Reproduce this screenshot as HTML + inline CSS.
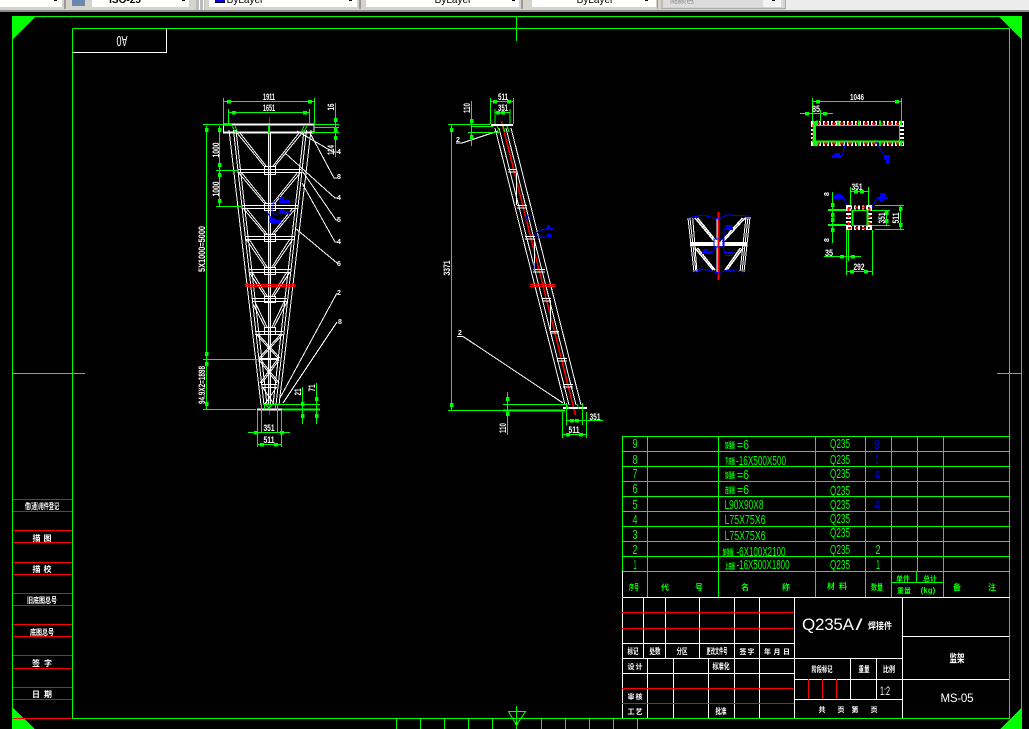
<!DOCTYPE html>
<html lang="zh"><head><meta charset="utf-8"><title>CAD</title>
<style>
html,body{margin:0;padding:0;background:#000;width:1029px;height:729px;overflow:hidden}
svg{display:block}
.g{stroke:#0f0;fill:none;stroke-width:1}
.g2{stroke:#0f0;fill:none;stroke-width:2}
.w{stroke:#fff;fill:none;stroke-width:1}
.w2{stroke:#fff;fill:none;stroke-width:2}
.r{stroke:#f00;fill:none;stroke-width:1}
.b{stroke:#00f;fill:none;stroke-width:1}
.a{stroke:#0f0;fill:none;stroke-width:3.5}
text{font-family:"Liberation Sans","Noto Sans CJK SC",sans-serif;font-size:9px;text-anchor:middle}
.tw{fill:#fff}.tg{fill:#0f0}.tb{fill:#00f}
.d{font-size:9px;font-weight:bold;fill:#fff}
.c{font-family:"Noto Sans CJK SC","WenQuanYi Zen Hei",sans-serif;font-size:8px;font-weight:bold}
.s{font-family:"Noto Sans CJK SC","WenQuanYi Zen Hei",sans-serif;font-size:7px;font-weight:bold}
.n{font-size:12.500px}
</style></head><body>
<svg xmlns="http://www.w3.org/2000/svg" width="1029" height="729" viewBox="0 0 1029 729" shape-rendering="crispEdges">
<rect width="1029" height="729" fill="#000"/>
<!-- toolbar -->
<rect width="1029" height="11" fill="#d6d3cc"/>
<rect x="785" width="244" height="10" fill="#ececec"/>
<rect y="10" width="1029" height="2" fill="#8c8c8c"/>
<rect x="0" width="62" height="7" fill="#fff"/>
<rect x="64" width="2" height="9" fill="#999"/>
<rect x="72" width="13" height="6" fill="#6c87ad"/>
<rect x="92" width="97" height="7" fill="#fff"/>
<text x="125" y="3" style="font-size:10px;font-weight:bold" fill="#000">ISO-25</text>
<rect x="196" width="9" height="10" fill="#bbb"/><rect x="199" width="1" height="10" fill="#fff"/><rect x="203" width="1" height="10" fill="#fff"/>
<rect x="209" width="148" height="7" fill="#fff"/>
<rect x="215" width="10" height="2" fill="#00f"/><rect x="215" y="2" width="10" height="1" fill="#000"/>
<text x="245" y="3" style="font-size:10px" fill="#000">ByLayer</text>
<rect x="359" width="2" height="9" fill="#999"/>
<rect x="366" width="153" height="7" fill="#fff"/>
<text x="453" y="3" style="font-size:10px" fill="#000">ByLayer</text>
<rect x="521" width="2" height="9" fill="#999"/>
<rect x="532" width="124" height="7" fill="#fff"/>
<text x="595" y="3" style="font-size:10px" fill="#000">ByLayer</text>
<rect x="657" width="1" height="9" fill="#999"/>
<rect x="663" width="120" height="7" fill="#dcdcdc"/>
<rect x="763" width="18" height="7" fill="#f4f4f4"/>
<path d="M662 0v8.500h123.500v-8.500" fill="none" stroke="#aaa"/>
<text x="682" y="3" class="c" style="font-weight:normal" fill="#888">随颜色</text>
<g fill="#000"><rect x="54" y="0" width="3" height="1"/><rect x="182" y="0" width="3" height="1"/><rect x="349" y="0" width="3" height="1"/><rect x="512" y="0" width="3" height="1"/><rect x="645" y="0" width="3" height="1"/><rect x="772" y="0" width="3" height="1"/></g>

<!-- frame -->
<path class="g" d="M12.500 16.500H1021.500V729M12.500 16.500V729M72.500 28.500H1009.500V718.500H72.500V28.500M516.500 16.500V41M12.500 373.500H85M997 373.500H1021.500"/>
<path class="g" d="M396.500 718V729M420.500 718V729M444.500 718V729M468.500 718V729M492.500 718V729M516.500 706V729M541.500 718V729M565.500 718V729M589.500 718V729M613.500 718V729M637.500 718V729"/>
<path class="g" d="M508.500 711.500H525.500L516.500 725Z"/><rect x="515" y="722" width="3" height="3" fill="#0f0"/>
<g fill="#0f0"><path d="M12 16H36L12 40Z"/><path d="M998 16H1022V40Z"/><path d="M12 707L35 729H12Z"/><path d="M1022 707V729H1000Z"/></g>
<!-- A0 -->
<path class="w" d="M72.500 52.500H166.500V28.500"/>
<text transform="rotate(180 122 41.500)" x="122" y="47" class="tw" style="font-size:15px" textLength="11" lengthAdjust="spacingAndGlyphs">A0</text>

<!-- FRONT TRUSS -->
<path class="w" d="M268.500 133V405M270.500 133V405"/>
<path class="r" d="M269.500 117V415"/>
<path class="w2" d="M223 124.500H314M223 132.500H314"/><path class="w" d="M223.500 124V133M314 124V133"/>
<path class="w" d="M229 130L261 405M233.500 130L264 405M311 130L279 405M306.500 130L276 405M236 130L267 405M304 130L273 405"/>
<!-- horizontals -->
<path class="w" d="M238 169.500H301M238 172.500H301M242 205.500H298M242 208.500H298M246 236.500H294M246 239.500H294M249 269.500H291M249 272.500H291M252 298.500H287M252 301.500H287M255 331.500H283M255 334.500H283M262 384.500H277M262 387.500H277"/>
<path class="w2" d="M259 359H279"/>
<!-- boxes -->
<path class="w" d="M264.500 166.500H275.500V174.500H264.500ZM264.500 203.500H275.500V210.500H264.500ZM264.500 234.500H275.500V241.500H264.500ZM264.500 267.500H275.500V274.500H264.500ZM264.500 296.500H275.500V302.500H264.500ZM264.500 327.500H275.500V334.500H264.500Z"/>
<!-- diagonals -->
<path class="w" d="M237 133L264 166M240 133L266 166M302 133L275 166M299 133L273 166M238 172L264 203M241 172L266 203M301 172L275 203M298 172L273 203M243 208L265 234M246 208L267 234M296 208L274 234M293 208L272 234M246 239L265 267M249 239L267 267M293 239L274 267M290 239L272 267M249 272L265 296M252 272L267 296M290 272L274 296M287 272L272 296M252 302L265 327M255 302L267 327M287 302L274 327M284 302L272 327M256 334L278 358M258 334L280 358M283 334L261 358M281 334L259 358M259 360L277 383M261 360L279 383M279 360L262 383M277 360L260 383M263 388L274 404M276 388L265 404"/>
<path class="r" d="M245 284.500H295M245 286.500H295"/>
<path class="w2" d="M257 409.500H282"/>
<path class="g" d="M232 126L236 133M235 126L238 133M307 126L303 133M304 126L301 133M269.500 126V133M268.500 126V133M264.500 404V409M275.500 404V409M265 404.500H275M266 405L270 409M272 405L268 409"/>
<!-- leaders -->
<path class="w" d="M297 131L333 152H337M310 133L334 178H337M285 153L335 198H338M303 172L336 220H338M302 183L335 242H338M295 228L337 263H338M280 398L337 293M283 403L337 322"/>
<text x="339" y="154" class="d" style="font-size:7px">4</text><text x="339" y="179" class="d" style="font-size:7px">8</text><text x="339" y="200" class="d" style="font-size:7px">4</text><text x="339" y="222" class="d" style="font-size:7px">5</text><text x="339" y="244" class="d" style="font-size:7px">4</text><text x="339" y="266" class="d" style="font-size:7px">6</text><text x="339" y="295" class="d" style="font-size:7px">2</text><text x="340" y="324" class="d" style="font-size:7px">8</text>
<!-- blue -->
<path class="b" d="M274 206C270 209 272 213 277 215M272 205L276 200M266 211L272 219"/>
<g fill="#00f"><rect x="279" y="200" width="11" height="3"/><rect x="279" y="197" width="5" height="3"/><rect x="279" y="211" width="11" height="3"/><rect x="279" y="209" width="5" height="2"/><rect x="270" y="220" width="11" height="3"/><rect x="270" y="218" width="5" height="2"/></g>
<!-- green dims -->
<path class="g" d="M223.500 98V124M314.500 98V124M228.500 109V124M309.500 109V124M223 101.500H314M228 112.500H310"/>
<path class="a" d="M227 101.500h4M308 101.500h4M232 112.500h4M303 112.500h4"/>
<text x="269" y="100" class="d" textLength="12" lengthAdjust="spacingAndGlyphs">1911</text>
<text x="269" y="111" class="d" textLength="12" lengthAdjust="spacingAndGlyphs">1651</text>
<path class="g" d="M335.500 103V157M314 124.500H339M314 127.500H339M312 132.500H339"/>
<path class="a" d="M335.500 118v4M335.500 128v4M335.500 136v4"/>
<text transform="rotate(-90 331 107)" x="331" y="110" class="d" textLength="7" lengthAdjust="spacingAndGlyphs">16</text>
<text transform="rotate(-90 331 150)" x="331" y="153" class="d" textLength="10" lengthAdjust="spacingAndGlyphs">114</text>
<path class="g" d="M206.500 126V409M203 124.500H232M219.500 126V206M216 170.500H238M216 206.500H242M203 359.500H258M203 409.500H256"/>
<path class="a" d="M206.500 128v4M206.500 352v4M206.500 362v4M206.500 402v4M219.500 128v4M219.500 163v4M219.500 173v4M219.500 199v4"/>
<text transform="rotate(-90 216 150)" x="216" y="153" class="d" textLength="15" lengthAdjust="spacingAndGlyphs">1000</text>
<text transform="rotate(-90 216 189)" x="216" y="192" class="d" textLength="15" lengthAdjust="spacingAndGlyphs">1000</text>
<text transform="rotate(-90 202 249)" x="202" y="252" class="d" textLength="46" lengthAdjust="spacingAndGlyphs">5X1000=5000</text>
<text transform="rotate(-90 202 385)" x="202" y="388" class="d" textLength="38" lengthAdjust="spacingAndGlyphs">94.9X2=1898</text>
<path class="g" d="M261.500 405V433M277.500 405V433M248 432.500H290M257.500 411V447M281.500 411V447M258 444.500H282M268 404.500H320M316.500 383V424M302.500 387V424"/>
<path class="g2" d="M282 409.500H320"/>
<path class="a" d="M254 432.500h4M280 432.500h4M260 444.500h4M274 444.500h4M302.500 402v4M302.500 414v4M316.500 397v4M316.500 414v4"/>
<text x="269" y="431" class="d" textLength="11" lengthAdjust="spacingAndGlyphs">351</text>
<text x="269" y="443" class="d" textLength="11" lengthAdjust="spacingAndGlyphs">511</text>
<text transform="rotate(-90 298 392)" x="298" y="395" class="d" textLength="7" lengthAdjust="spacingAndGlyphs">21</text>
<text transform="rotate(-90 312 388)" x="312" y="391" class="d" textLength="7" lengthAdjust="spacingAndGlyphs">71</text>

<!-- SIDE VIEW -->
<path class="w" d="M495 128L565 405M499 128L569 405M506 128L576 405M511 128L581 405"/>
<path d="M501.500 121L575.500 415" stroke="#f00" stroke-width="1.500" fill="none"/>
<path class="w2" d="M491 125H513"/><path class="w2" d="M563 408H587"/>
<path class="w" d="M508 169.500H517M508 172H517M517 205.500H527M517 208H527M525 236.500H535M525 239H535M533 269.500H545M533 272H545M542 298.500H551M542 301H551M550 331.500H559M550 333H559M557 358.500H567M557 361H567M563 384.500H573M563 387H573"/>
<path class="w" d="M516.500 173V205M534.500 239V270M550.500 300V330"/>
<path class="r" d="M530 284.500H555M530 286.500H555"/>
<path class="w" d="M456 143H462L498 131M457 336.500H463L563 403"/>
<path class="g" d="M497 126L500 132M503 126L505 132M507 126L509 132M566 404L569 409M577 404L579 409"/>
<text x="458" y="142" class="d" style="font-size:7px">2</text>
<text x="460" y="335" class="d" style="font-size:7px">2</text>
<path class="b" d="M526 216V222M526 216H531M534 236C538 231 543 229 546 229M535 237H552M534 263V270"/>
<g fill="#00f"><rect x="546" y="228" width="7" height="2"/><rect x="547" y="225" width="3" height="3"/><rect x="547" y="234" width="4" height="3"/></g>
<path class="g" d="M451.500 124V410M448 124.500H490M471.500 101V146M471 126.500H493M468 132.500H500M507.500 392V435M503 404.500H565M490.500 98V124M513.500 98V124M495 109V124M510 109V124M491 101.500H513M495 112.500H510M566.500 403V425M582.500 403V425M566 420.500H603M562.500 412V438M586.500 412V438M562 434.500H586"/>
<path class="g2" d="M503 410.500H565"/><path class="g" d="M448 410.500H503"/>
<path class="a" d="M451.500 128v4M451.500 403v4M471.500 119v4M471.500 135v4M507.500 397v4M507.500 412v4M493 101.500h4M507 101.500h4M496 112.500h4M501 112.500h4M570 420.500h4M575 420.500h4M566 434.500h4M579 434.500h4"/>
<text x="503" y="100" class="d" textLength="10" lengthAdjust="spacingAndGlyphs">511</text>
<text x="503" y="111" class="d" textLength="10" lengthAdjust="spacingAndGlyphs">351</text>
<text x="595" y="420" class="d" textLength="11" lengthAdjust="spacingAndGlyphs">351</text>
<text x="574" y="433" class="d" textLength="11" lengthAdjust="spacingAndGlyphs">511</text>
<text transform="rotate(-90 467 108)" x="467" y="111" class="d" textLength="10" lengthAdjust="spacingAndGlyphs">110</text>
<text transform="rotate(-90 503 428)" x="503" y="431" class="d" textLength="10" lengthAdjust="spacingAndGlyphs">110</text>
<text transform="rotate(-90 447 268)" x="447" y="271" class="d" textLength="15" lengthAdjust="spacingAndGlyphs">3371</text>

<!-- PLAN -->
<g>
<path d="M811 123.500H904M811 143.500H904" stroke="#fff" stroke-width="5" stroke-dasharray="2 2" fill="none"/>
<path d="M816 123.500H899M816 143.500H899" stroke="#f00" stroke-width="2" stroke-dasharray="4 4" fill="none"/>
<path d="M813.500 121V146M901.500 121V146" stroke="#fff" stroke-width="5" stroke-dasharray="2 2" fill="none"/>
<path d="M813.500 124V144" stroke="#f00" stroke-width="2" stroke-dasharray="3 4" fill="none"/>
<path class="g" d="M812 125.500H899M899.500 125V142"/>
<path class="g2" d="M812 141.500H904"/>
<path d="M814.500 121V146" stroke="#0f0" stroke-width="3" fill="none"/>
<path d="M816 123H904" stroke="#0f0" stroke-width="5" stroke-dasharray="2 19" fill="none"/>
<path d="M816 143.500H904" stroke="#0f0" stroke-width="5" stroke-dasharray="2 19" fill="none"/>
</g>
<path class="g" d="M812.500 98V121M901.500 98V121M812 101.500H902M800 113.500H833M820.500 110V122"/>
<path class="a" d="M816 101.500h4M895 101.500h4M805 113.500h4M823 113.500h4"/>
<text x="857" y="100" class="d" style="font-size:8px" textLength="14" lengthAdjust="spacingAndGlyphs">1046</text>
<text x="816" y="112" class="d" textLength="8" lengthAdjust="spacingAndGlyphs">85</text>
<path class="b" d="M842 156L846 142M887 160L876 142M872 126V128"/>
<g fill="#00f"><rect x="832" y="155" width="10" height="3"/><rect x="834" y="153" width="6" height="2"/><rect x="884" y="155" width="6" height="5"/><rect x="886" y="160" width="3" height="3"/></g>

<!-- SECTION -->
<g>
<path d="M846 207.500H872M846 228H872" stroke="#fff" stroke-width="4" stroke-dasharray="2 2" fill="none"/>
<path d="M848 207.500H870M848 228H870" stroke="#f00" stroke-width="2" stroke-dasharray="3 4" fill="none"/>
<path d="M848.500 205V230M869.500 205V230" stroke="#fff" stroke-width="5" stroke-dasharray="2 2" fill="none"/>
<path d="M848.500 208V228M869.500 208V228" stroke="#f00" stroke-width="2" stroke-dasharray="3 4" fill="none"/>
<path class="g2" d="M852.500 210V225M867.500 210V225"/>
<path class="g" d="M852 210.500H868M852 225.500H868"/>
</g>
<path class="g" d="M850.500 187V205M868.500 187V205M850 191.500H868M832.500 192V243M872 210.500H890M872 225.500H890M886.500 210V226M875 205.500H904M875 229.500H904M900.500 205V230M824 256.500H861M846.500 230V275M848.500 230V261M872.500 230V275M846 271.500H872"/>
<path class="g2" d="M828 210H846M828 225H846"/>
<path class="a" d="M854 191.500h4M860 191.500h4M832.500 203v4M832.500 213v4M832.500 218v4M832.500 228v4M886.500 211v4M886.500 219v4M900.500 207v4M900.500 223v4M840 256.500h4M851 256.500h4M850 271.500h4M864 271.500h4"/>
<text x="857" y="190" class="d" textLength="11" lengthAdjust="spacingAndGlyphs">351</text>
<text transform="rotate(-90 826 194)" x="826" y="197" class="d" style="font-size:7px">8</text>
<text transform="rotate(-90 826 240)" x="826" y="243" class="d" style="font-size:7px">8</text>
<text transform="rotate(-90 882 218)" x="882" y="221" class="d" textLength="11" lengthAdjust="spacingAndGlyphs">351</text>
<text transform="rotate(-90 896 218)" x="896" y="221" class="d" textLength="11" lengthAdjust="spacingAndGlyphs">511</text>
<text x="829" y="256" class="d" textLength="8" lengthAdjust="spacingAndGlyphs">35</text>
<text x="859" y="270" class="d" textLength="11" lengthAdjust="spacingAndGlyphs">292</text>
<path class="b" d="M844 198L847 205M877 198L872 207"/>
<g fill="#00f"><rect x="834" y="196" width="10" height="3"/><rect x="835" y="194" width="6" height="2"/><rect x="877" y="197" width="11" height="2"/><rect x="880" y="193" width="6" height="4"/><rect x="880" y="199" width="3" height="3"/></g>

<!-- DETAIL -->
<path class="w" d="M688 218L694 272M690 218L696 272M692.700 218L697 272M750 217L744 272M748 217L742 272M746 217L740 272"/>
<path d="M695 218L715 242M697.500 218L717 242M745 218L723 242M742.500 218L721 242M695 248L713 270M697.500 248L715 270M743 248L727 270M740.500 248L725 270" stroke="#fff" stroke-width="1.500" fill="none"/>
<path d="M690 244H747" stroke="#fff" stroke-width="4" fill="none"/>
<path class="w" d="M717 218V272"/>
<path d="M718.500 212V280" stroke="#f00" stroke-width="2" fill="none"/>
<path class="b" d="M688 218L703 215L718 219L727 215L750 216M694 272L703 269L718 273L728 270L744 272M714 239H723V247H714ZM724 228V246M712 252L716 247M725 254L723 247"/>
<g fill="#00f"><rect x="725" y="225" width="7" height="2"/><rect x="725" y="228" width="8" height="2"/><rect x="702" y="251" width="11" height="3"/><rect x="703" y="249" width="5" height="2"/><rect x="725" y="252" width="8" height="2"/><rect x="725" y="255" width="8" height="1"/></g>

<!-- PARTS TABLE -->
<path class="g" d="M622.500 436.500H1009.500M622.500 451.500H1009.500M622.500 466.500H1009.500M622.500 481.500H1009.500M622.500 496.500H1009.500M622.500 511.500H1009.500M622.500 526.500H1009.500M622.500 541.500H1009.500M622.500 556.500H1009.500M622.500 571.500H1009.500M622.500 436V571M647.500 436V597M718.500 436V597M815.500 436V597M865.500 436V597M891.500 436V597M917.500 436V571M943.500 436V597M1009.500 436V718M891.500 582.500H943.500M916.500 571V582"/>
<path class="w" d="M622.500 571V597"/>
<text x="635" y="448" class="tg n" textLength="5" lengthAdjust="spacingAndGlyphs">9</text>
<text x="635" y="464" class="tg n" textLength="5" lengthAdjust="spacingAndGlyphs">8</text>
<text x="635" y="478" class="tg n" textLength="5" lengthAdjust="spacingAndGlyphs">7</text>
<text x="635" y="493" class="tg n" textLength="5" lengthAdjust="spacingAndGlyphs">6</text>
<text x="635" y="509" class="tg n" textLength="5" lengthAdjust="spacingAndGlyphs">5</text>
<text x="635" y="524" class="tg n" textLength="5" lengthAdjust="spacingAndGlyphs">4</text>
<text x="635" y="539" class="tg n" textLength="5" lengthAdjust="spacingAndGlyphs">3</text>
<text x="635" y="554" class="tg n" textLength="5" lengthAdjust="spacingAndGlyphs">2</text>
<text x="635" y="569" class="tg n" textLength="3" lengthAdjust="spacingAndGlyphs">1</text>

<text x="730" y="448" class="tg c" textLength="10" lengthAdjust="spacingAndGlyphs">加强板</text><text x="743" y="449" class="tg n" textLength="12" lengthAdjust="spacingAndGlyphs">=6</text>
<text x="730" y="464" class="tg c" textLength="10" lengthAdjust="spacingAndGlyphs">下底板</text><text x="761" y="465" class="tg n" textLength="50" lengthAdjust="spacingAndGlyphs">-16X500X500</text>
<text x="730" y="478" class="tg c" textLength="10" lengthAdjust="spacingAndGlyphs">加强板</text><text x="743" y="479" class="tg n" textLength="12" lengthAdjust="spacingAndGlyphs">=6</text>
<text x="730" y="493" class="tg c" textLength="10" lengthAdjust="spacingAndGlyphs">连接板</text><text x="743" y="494" class="tg n" textLength="12" lengthAdjust="spacingAndGlyphs">=6</text>
<text x="744" y="509" class="tg n" textLength="39" lengthAdjust="spacingAndGlyphs">L90X90X8</text>
<text x="745" y="524" class="tg n" textLength="41" lengthAdjust="spacingAndGlyphs">L75X75X6</text>
<text x="745" y="540" class="tg n" textLength="41" lengthAdjust="spacingAndGlyphs">L75X75X6</text>
<text x="728" y="555" class="tg c" textLength="11" lengthAdjust="spacingAndGlyphs">加强板</text><text x="761" y="556" class="tg n" textLength="49" lengthAdjust="spacingAndGlyphs">-6X100X2100</text>
<text x="730" y="569" class="tg c" textLength="10" lengthAdjust="spacingAndGlyphs">上底板</text><text x="763" y="569" class="tg n" textLength="53" lengthAdjust="spacingAndGlyphs">-16X500X1800</text>

<text x="840" y="448" class="tg n" textLength="20" lengthAdjust="spacingAndGlyphs">Q235</text>
<text x="840" y="464" class="tg n" textLength="20" lengthAdjust="spacingAndGlyphs">Q235</text>
<text x="840" y="478" class="tg n" textLength="20" lengthAdjust="spacingAndGlyphs">Q235</text>
<text x="840" y="495" class="tg n" textLength="20" lengthAdjust="spacingAndGlyphs">Q235</text>
<text x="840" y="509" class="tg n" textLength="20" lengthAdjust="spacingAndGlyphs">Q235</text>
<text x="840" y="523" class="tg n" textLength="20" lengthAdjust="spacingAndGlyphs">Q235</text>
<text x="840" y="537" class="tg n" textLength="20" lengthAdjust="spacingAndGlyphs">Q235</text>
<text x="840" y="554" class="tg n" textLength="20" lengthAdjust="spacingAndGlyphs">Q235</text>
<text x="840" y="569" class="tg n" textLength="20" lengthAdjust="spacingAndGlyphs">Q235</text>
<text x="877" y="449" class="tb n" textLength="5" lengthAdjust="spacingAndGlyphs">8</text>
<text x="877" y="464" class="tb n" textLength="4" lengthAdjust="spacingAndGlyphs">1</text>
<text x="877" y="479" class="tb n" textLength="5" lengthAdjust="spacingAndGlyphs">4</text>
<text x="877" y="509" class="tb n" textLength="5" lengthAdjust="spacingAndGlyphs">4</text>
<text x="878" y="554" class="tg n" textLength="5" lengthAdjust="spacingAndGlyphs">2</text>
<text x="878" y="569" class="tg n" textLength="4" lengthAdjust="spacingAndGlyphs">1</text>

<text x="634" y="590" class="tg c" textLength="10" lengthAdjust="spacingAndGlyphs">序号</text>
<text x="665" y="590" class="tg c">代</text><text x="699" y="590" class="tg c">号</text>
<text x="745" y="590" class="tg c">名</text><text x="786" y="590" class="tg c">称</text>
<text x="831" y="589" class="tg c">材</text><text x="843" y="589" class="tg c">料</text>
<text x="877" y="590" class="tg c" textLength="12" lengthAdjust="spacingAndGlyphs">数量</text>
<text x="903" y="581" class="tg s" textLength="14" lengthAdjust="spacing">单件</text>
<text x="930" y="581" class="tg s" textLength="14" lengthAdjust="spacing">总计</text>
<text x="904" y="593" class="tg s" textLength="14" lengthAdjust="spacing">重量</text>
<text x="928" y="593" class="tg" style="font-size:8px;font-weight:bold">(kg)</text>
<text x="957" y="590" class="tg c">备</text><text x="992" y="590" class="tg c">注</text>

<!-- TITLE BLOCK -->
<path class="w" d="M622.500 597.500H1009.500M622.500 597.500V718M643.500 597V658M665.500 597V658M699.500 597V658M734.500 597V658M759.500 597V658M794.500 597V718M902.500 597V718M622 643.500H794M622 658.500H902M622 673.500H794M647.500 658V718M673.500 658V718M708.500 658V718M734.500 658V718M759.500 658V718M794 679.500H1009M794 699.500H902M850.500 658V699M876.500 658V699M902 636.500H1009"/>
<path class="r" d="M622 612.500H794M622 628.500H794M622 688.500H794M622 703.500H794M808.500 679V699M822.500 679V699M836.500 679V699"/>
<path class="g" d="M72 718.500H1009"/>
<text x="828" y="630" class="tw" style="font-size:17px" textLength="52" lengthAdjust="spacing">Q235A</text>
<text x="859" y="630" class="tw" style="font-size:16px" textLength="7" lengthAdjust="spacingAndGlyphs">/</text>
<text x="880" y="629" class="tw c" style="font-size:9px" textLength="24" lengthAdjust="spacingAndGlyphs">焊接件</text>
<text x="957" y="662" class="tw c" style="font-size:11px" textLength="15" lengthAdjust="spacingAndGlyphs">监架</text>
<text x="957" y="702" class="tw" style="font-size:11.500px" textLength="33" lengthAdjust="spacing">MS-05</text>
<text x="885" y="695" class="tw" style="font-size:12px" textLength="10" lengthAdjust="spacingAndGlyphs">1:2</text>

<text x="633" y="654" class="tw c" textLength="11" lengthAdjust="spacingAndGlyphs">标记</text>
<text x="655" y="654" class="tw c" textLength="11" lengthAdjust="spacingAndGlyphs">处数</text>
<text x="682" y="654" class="tw c" textLength="11" lengthAdjust="spacingAndGlyphs">分区</text>
<text x="717" y="654" class="tw c" textLength="21" lengthAdjust="spacingAndGlyphs">更改文件号</text>
<text x="747" y="654" class="tw s" textLength="15" lengthAdjust="spacing">签字</text>
<text x="777" y="654" class="tw s" textLength="26" lengthAdjust="spacing">年月日</text>
<text x="635" y="669" class="tw s" textLength="15" lengthAdjust="spacing">设计</text>
<text x="721" y="669" class="tw c" textLength="17" lengthAdjust="spacingAndGlyphs">标准化</text>
<text x="635" y="699" class="tw s" textLength="15" lengthAdjust="spacing">审核</text>
<text x="635" y="714" class="tw s" textLength="15" lengthAdjust="spacing">工艺</text>
<text x="721" y="714" class="tw c" textLength="11" lengthAdjust="spacingAndGlyphs">批准</text>
<text x="822" y="672" class="tw c" textLength="21" lengthAdjust="spacingAndGlyphs">阶段标记</text>
<text x="864" y="672" class="tw c" textLength="11" lengthAdjust="spacingAndGlyphs">重量</text>
<text x="889" y="672" class="tw c" textLength="12" lengthAdjust="spacingAndGlyphs">比例</text>
<text x="822" y="712" class="tw s">共</text><text x="841" y="712" class="tw s">页</text><text x="855" y="712" class="tw s">第</text><text x="874" y="712" class="tw s">页</text>

<!-- LEFT STRIP -->
<path class="r" d="M13 499.500H72M13 511.500H72M13 530.500H72M13 542.500H72M13 562.500H72M13 574.500H72M13 593.500H72M13 605.500H72M13 624.500H72M13 636.500H72M13 655.500H72M13 668.500H72M13 687.500H72M13 699.500H72M13 718.500H72"/>
<text x="42" y="509" class="tw c" textLength="34" lengthAdjust="spacingAndGlyphs">借(通)用件登记</text>
<text x="42" y="541" class="tw c" textLength="19" lengthAdjust="spacing">描图</text>
<text x="42" y="572" class="tw c" textLength="19" lengthAdjust="spacing">描校</text>
<text x="42" y="603" class="tw c" textLength="30" lengthAdjust="spacingAndGlyphs">旧底图总号</text>
<text x="42" y="635" class="tw c" textLength="24" lengthAdjust="spacingAndGlyphs">底图总号</text>
<text x="42" y="666" class="tw c" textLength="20" lengthAdjust="spacing">签字</text>
<text x="42" y="697" class="tw c" textLength="20" lengthAdjust="spacing">日期</text>
</svg>
</body></html>
